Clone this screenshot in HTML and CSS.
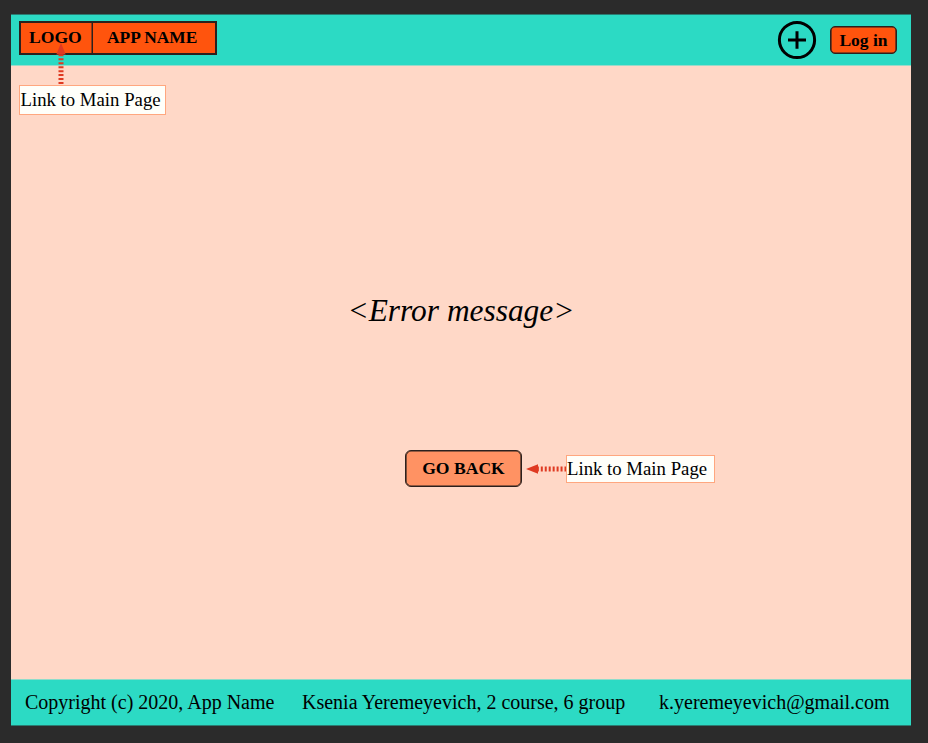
FILE: index.html
```html
<!DOCTYPE html>
<html lang="en">
<head>
<meta charset="utf-8">
<title>Error page</title>
<link rel="stylesheet" href="styles.css">
</head>
<body>
<div class="page">
  <header class="header">
    <div class="brand">
      <span class="logo">LOGO</span>
      <span class="app-name">APP NAME</span>
    </div>
    <div class="actions">
      <svg class="add" width="40" height="40" viewBox="0 0 40 40" fill="none" stroke="#000" stroke-width="3">
        <circle cx="20" cy="20" r="17.6"/>
        <path d="M20 11.2v17.6M11 20h18"/>
      </svg>
      <button class="login">Log in</button>
    </div>
  </header>
  <main class="main">
    <div class="note note-logo">Link to Main Page
      <svg class="arrow-up" width="12" height="42" viewBox="0 0 12 42">
        <path d="M6 41V11" stroke="#df3a22" stroke-width="5" stroke-dasharray="2 1.95"/>
        <path d="M6 0l4.7 11.5H1.3z" fill="#df3a22"/>
      </svg>
    </div>
    <p class="message">&lt;Error message&gt;</p>
    <div class="back-row">
      <button class="back">GO BACK</button>
      <svg class="arrow-left" width="41" height="12" viewBox="0 0 41 12">
        <path d="M40.5 6H12" stroke="#df3a22" stroke-width="5" stroke-dasharray="2 1.95"/>
        <path d="M0 6l12-4.7v9.4z" fill="#df3a22"/>
      </svg>
      <div class="note note-back">Link to Main Page</div>
    </div>
  </main>
  <footer class="footer">
    <span class="copyright">Copyright (c) 2020, App Name</span>
    <span class="author">Ksenia Yeremeyevich, 2 course, 6 group</span>
    <span class="email">k.yeremeyevich@gmail.com</span>
  </footer>
</div>
</body>
</html>
```
FILE: styles.css
```css
* { box-sizing: border-box; }
body {
  margin: 0;
  height: 743px;
  padding: 14px 17px 17px 11px;
  background: #2b2b2b;
  color: #000;
  font-family: "Liberation Serif", serif;
  overflow: hidden;
}
.page {
  display: flex;
  flex-direction: column;
  width: 900px;
  height: 712px;
  white-space: nowrap;
}
.header {
  display: flex;
  justify-content: space-between;
  height: 52px;
  padding: 7px 14px 0 8px;
  background: #2cdac4;
  border-top: 1px solid #2a7c72;
  border-bottom: 1px solid #9bdac9;
}
.brand {
  display: flex;
  width: 198px;
  height: 34px;
  margin-top: -1px;
  border: 2px solid #2b211e;
  background: #ff540d;
  font-size: 17.6px;
  font-weight: bold;
  line-height: 29px;
}
.logo {
  width: 72px;
  padding-left: 8px;
  border-right: 1px solid #2b211e;
  box-shadow: inset -0.5px 0 #2b211e;
}
.app-name { padding-left: 14px; font-size: 17.4px; }
.actions { display: flex; }
.add { margin: -2px 13px 0 0; }
.login {
  width: 67px;
  height: 28px;
  margin-top: 4px;
  padding: 0;
  border: 1px solid #2b211e;
  border-radius: 5px;
  box-shadow: inset 0 0 0 0.6px #2b211e;
  background: #ff540d;
  color: #000;
  font: bold 17.5px/26px "Liberation Serif", serif;
}
.main {
  flex: 1;
  padding: 19px 0 0 8px;
  background: #ffd8c7;
}
.note {
  border: 1px solid #ffa77f;
  background: #fffffa;
  font-size: 18.75px;
}
.note-logo {
  position: relative;
  width: 147px;
  height: 30px;
  padding-left: 0.5px;
  line-height: 28px;
}
.arrow-up { position: absolute; left: 35px; top: -43px; }
.message {
  width: 226px;
  margin: 178px 0 0 328.5px;
  font-size: 31.4px;
  font-style: italic;
  line-height: 36px;
}
.back-row { display: flex; align-items: center; margin: 121px 0 0 386px; }
.back {
  width: 117px;
  height: 37px;
  padding: 0;
  border: 1px solid #2b211e;
  border-radius: 6px;
  box-shadow: inset 0 0 0 0.6px #2b211e;
  background: #ff9263;
  color: #000;
  font: bold 17.6px/33px "Liberation Serif", serif;
}
.arrow-left { margin: 0 -1px 0 4px; }
.note-back { width: 149px; height: 28px; line-height: 26px; }
.footer {
  display: flex;
  height: 47px;
  padding-left: 14px;
  border-top: 1px solid #8fdcca;
  border-bottom: 1px solid #2a7c72;
  background: #2cdac4;
  font-size: 20px;
  line-height: 44px;
}
.copyright { width: 277px; }
.author { width: 357px; }
```
